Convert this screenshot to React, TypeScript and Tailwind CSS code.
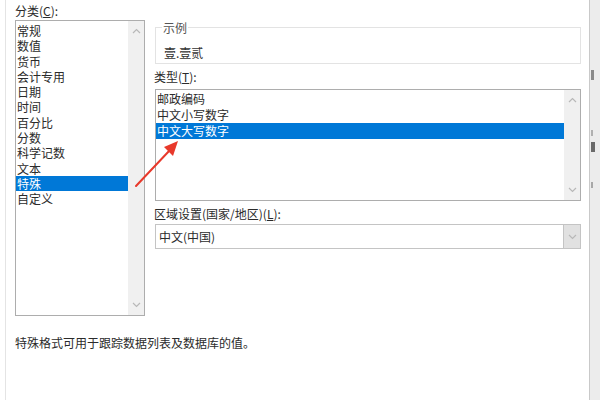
import React from "react";

const FONT = { fontFamily: '"Microsoft YaHei", "Noto Sans CJK SC", "Liberation Sans", sans-serif' };

const CATEGORIES = ["常规", "数值", "货币", "会计专用", "日期", "时间", "百分比", "分数", "科学记数", "文本", "特殊", "自定义"];
const TYPES = ["邮政编码", "中文小写数字", "中文大写数字"];

function Chevron({ up }: { up?: boolean }) {
  return (
    <svg width="9" height="6" viewBox="0 0 9 6" className="block">
      <path d={up ? "M1 5 L4.5 1.5 L8 5" : "M1 1 L4.5 4.5 L8 1"} fill="none" stroke="#b8b8b8" strokeWidth="1.2" />
    </svg>
  );
}

function ScrollBar() {
  return (
    <div className="w-[16px] bg-[#f0f0f0] flex flex-col items-center justify-between py-[7px]">
      <Chevron up />
      <Chevron />
    </div>
  );
}

export default function App() {
  return (
    <div className="w-[600px] h-[400px] bg-white relative overflow-hidden text-[12px] text-[#2b2b2b] leading-[15px]" style={FONT}>
      <div className="absolute left-0 top-0 bottom-0 w-[6px] border-r border-[#e4e4e4] bg-white" />
      <div className="absolute right-0 top-0 bottom-0 w-[11px] border-l border-[#c9c9c9] bg-[#ececec]">
        <div className="mt-[70px] ml-[1px] w-[3px] h-[10px] bg-[#8a8a8a]" />
        <div className="mt-[50px] ml-[1px] w-[2px] h-[6px] bg-[#b0b0b0]" />
        <div className="mt-[6px] ml-[1px] w-[4px] h-[10px] bg-[#6a6a6a]" />
        <div className="mt-[30px] ml-[1px] w-[2px] h-[6px] bg-[#a8a8a8]" />
      </div>

      <div className="flex pl-[15px] pt-[3px] gap-[10px]">
        <div className="w-[130px]">
          <div className="h-[17px]">分类(<span className="underline">C</span>):</div>
          <div className="h-[296px] border border-[#adadad] flex">
            <div className="flex-1 pt-[2px]">
              {CATEGORIES.map((c) => (
                <div
                  key={c}
                  className={`h-[15.3px] leading-[15px] pl-[1px] ${c === "特殊" ? "bg-[#0078d7] text-white" : ""}`}
                >
                  {c}
                </div>
              ))}
            </div>
            <ScrollBar />
          </div>
        </div>

        <div className="w-[426px]">
          <div className="relative mt-[24px] h-[37px] border border-[#e3e3e3]">
            <span className="absolute left-[6px] -top-[8px] bg-white px-[1px] text-[#555]">示例</span>
            <div className="pt-[17px] pl-[8px] text-[#333]">壹.壹贰</div>
          </div>
          <div className="mt-[5px] h-[20px] -ml-[1px]">类型(<span className="underline">T</span>):</div>
          <div className="h-[112px] border border-[#adadad] flex">
            <div className="flex-1 pt-[1px]">
              {TYPES.map((t) => (
                <div
                  key={t}
                  className={`h-[16px] pl-[1px] ${t === "中文大写数字" ? "bg-[#0078d7] text-white" : ""}`}
                >
                  {t}
                </div>
              ))}
            </div>
            <ScrollBar />
          </div>
          <div className="mt-[5px] h-[18px] -ml-[1px]">区域设置(国家/地区)(<span className="underline">L</span>):</div>
          <div className="h-[25px] border border-[#c4c4c4] flex">
            <div className="flex-1 pl-[3px] flex items-center">中文(中国)</div>
            <div className="w-[17px] bg-[#e1e1e1] border-l border-[#c4c4c4] flex items-center justify-center">
              <Chevron />
            </div>
          </div>
        </div>
      </div>

      <div className="pl-[15px] mt-[19px]">特殊格式可用于跟踪数据列表及数据库的值。</div>

      <svg className="absolute left-[130px] top-[136px]" width="54" height="56" viewBox="0 0 54 56">
        <line x1="6" y1="50" x2="40" y2="14" stroke="#e8392b" strokeWidth="2" strokeLinecap="round" />
        <polygon points="48,5 34,11 43,20" fill="#e8392b" />
      </svg>
    </div>
  );
}
